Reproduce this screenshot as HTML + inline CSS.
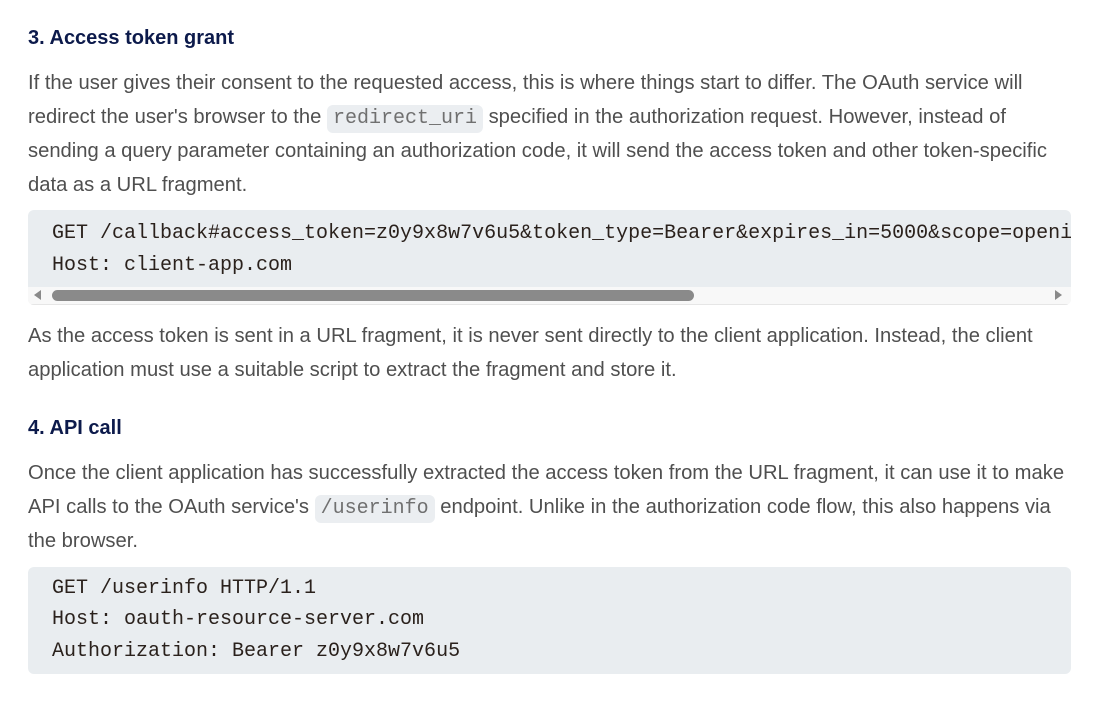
<!DOCTYPE html>
<html><head><style>
body{margin:0;width:1104px;height:707px;background:#fff;position:relative;overflow:hidden;font-family:"Liberation Sans",Arial,sans-serif;}
.h{position:absolute;left:28px;font-size:20px;font-weight:bold;color:#0c1a4b;line-height:24px;}
.p{position:absolute;left:28px;width:1070px;font-size:20.2px;line-height:34px;color:#4f4f4f;margin:0;white-space:nowrap;}
.ic{font-family:"Liberation Mono",monospace;font-size:20px;line-height:20px;color:#707070;background:#ebeef1;border-radius:6px;padding:4px 6px;display:inline-block;}
.cb{position:absolute;left:28px;width:1043px;background:#e9edf0;border-radius:6px;overflow:hidden;}
.cl{position:absolute;left:24px;font-family:"Liberation Mono",monospace;font-size:20px;color:#2a211c;white-space:pre;line-height:20px;}
</style></head><body>
<div class="h" style="top:26px">3. Access token grant</div>
<p class="p" style="top:66px">If the user gives their consent to the requested access, this is where things start to differ. The OAuth service will<br>redirect the user's browser to the <span class="ic">redirect_uri</span> specified in the authorization request. However, instead of<br>sending a query parameter containing an authorization code, it will send the access token and other token-specific<br>data as a URL fragment.</p>
<div class="cb" style="top:210px;height:95px;">
<div class="cl" style="top:14px">GET /callback#access_token=z0y9x8w7v6u5&amp;token_type=Bearer&amp;expires_in=5000&amp;scope=openid%20profile&amp;state=ae13d489bd00e3c24</div>
<div class="cl" style="top:46px">Host: client-app.com</div>
<div style="position:absolute;left:0;top:77px;width:1043px;height:17px;background:#f8f8f8;border-bottom:1px solid #e6e6e6"></div>
<div style="position:absolute;left:6px;top:80px;width:0;height:0;border-top:5px solid transparent;border-bottom:5px solid transparent;border-right:7px solid #8a8a8a"></div>
<div style="position:absolute;left:24px;top:80px;width:642px;height:11px;background:#8a8a8a;border-radius:6px"></div>
<div style="position:absolute;left:1027px;top:80px;width:0;height:0;border-top:5px solid transparent;border-bottom:5px solid transparent;border-left:7px solid #8a8a8a"></div>
</div>
<p class="p" style="top:319px">As the access token is sent in a URL fragment, it is never sent directly to the client application. Instead, the client<br>application must use a suitable script to extract the fragment and store it.</p>
<div class="h" style="top:416px">4. API call</div>
<p class="p" style="top:456px">Once the client application has successfully extracted the access token from the URL fragment, it can use it to make<br>API calls to the OAuth service's <span class="ic">/userinfo</span> endpoint. Unlike in the authorization code flow, this also happens via<br>the browser.</p>
<div class="cb" style="top:567px;height:107px;">
<div class="cl" style="top:12px">GET /userinfo HTTP/1.1</div>
<div class="cl" style="top:43px">Host: oauth-resource-server.com</div>
<div class="cl" style="top:75px">Authorization: Bearer z0y9x8w7v6u5</div>
</div>
</body></html>
